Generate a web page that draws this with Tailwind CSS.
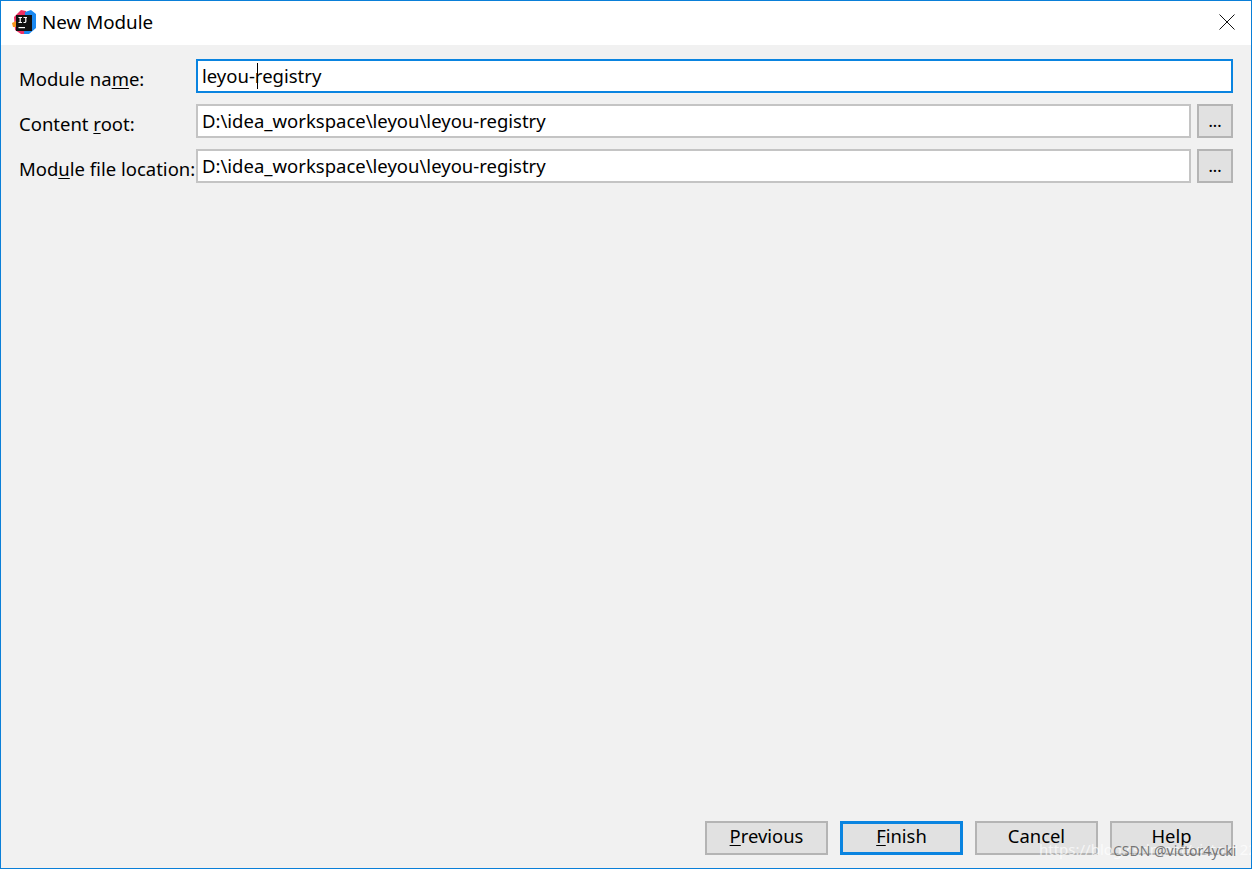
<!DOCTYPE html>
<html lang="en">
<head>
  <meta charset="UTF-8" />
  <title>New Module</title>
  <script src="https://cdn.jsdelivr.net/npm/@tailwindcss/browser@4"></script>
</head>
<body class="w-screen h-screen overflow-hidden font-['Noto_Sans',sans-serif] text-black">
  <div class="relative w-[1252px] h-[869px] flex flex-col border border-[#0a7fd8] bg-[#f1f1f1] overflow-hidden">

    <!-- title bar -->
    <div class="h-[44px] shrink-0 bg-white flex items-center pl-[11px] pr-[16px] pb-[2px]">
      <svg width="25" height="25" viewBox="0 0 25 25" class="shrink-0">
        <path d="M2 7 L9 0 L14 1 L14 24 L9 24 L3 20 Z" fill="#ef2f63"/>
        <path d="M0 13 L4 11 L4 17 L1 17 Z" fill="#f7941d"/>
        <path d="M13 2 L19 0 L24 4 L24 18 L17 24 L12 24 Z" fill="#1b88f0"/>
        <rect x="4" y="5" width="16" height="16" fill="#111"/>
        <path d="M6.5 7.5 H10 M8.2 7.5 V12.5 M6.5 12.5 H10 M11.5 7.5 H15 M13.8 7.5 V11.5 Q13.8 12.5 12.8 12.5 H11.5" stroke="#fff" stroke-width="1.2" fill="none"/>
        <rect x="6.5" y="17" width="6.5" height="1.2" fill="#fff"/>
      </svg>
      <span class="ml-[5px] text-[18.8px] leading-none">New Module</span>
      <svg width="16" height="16" viewBox="0 0 16 16" class="ml-auto">
        <path d="M0.5 0.5 L15.5 15.5 M15.5 0.5 L0.5 15.5" stroke="#111" stroke-width="1" fill="none"/>
      </svg>
    </div>

    <!-- form -->
    <div class="flex-1 flex flex-col pl-[18px] pr-[18px] pt-[14px] gap-[11px] text-[18.5px]">
      <div class="flex h-[34px]">
        <label class="w-[177px] shrink-0 leading-[40px] whitespace-nowrap">Module na<u class="underline-offset-2">m</u>e:</label>
        <div class="flex-1 border-2 border-[#0a84e0] bg-white pl-[4px] leading-[30px] relative">leyou-registry
          <span class="absolute left-[59px] top-[2px] h-[26px] w-px bg-black"></span>
        </div>
      </div>
      <div class="flex h-[34px]">
        <label class="w-[177px] shrink-0 leading-[40px] whitespace-nowrap">Content <u class="underline-offset-2">r</u>oot:</label>
        <div class="flex-1 border-2 border-[#c4c4c4] bg-white pl-[4px] leading-[30px]">D:\idea_workspace\leyou\leyou-registry</div>
        <button class="ml-[6px] w-[36px] border-2 border-[#b4b4b4] bg-[#e1e1e1] text-[16px] font-medium leading-none">...</button>
      </div>
      <div class="flex h-[34px]">
        <label class="w-[177px] shrink-0 leading-[40px] whitespace-nowrap">Mod<u class="underline-offset-2">u</u>le file location:</label>
        <div class="flex-1 border-2 border-[#c4c4c4] bg-white pl-[4px] leading-[30px]">D:\idea_workspace\leyou\leyou-registry</div>
        <button class="ml-[6px] w-[36px] border-2 border-[#b4b4b4] bg-[#e1e1e1] text-[16px] font-medium leading-none">...</button>
      </div>
    </div>

    <!-- footer buttons -->
    <div class="flex justify-end gap-[12px] pr-[18px] pb-[13px] text-[18.4px]">
      <button class="w-[123px] h-[34px] border-2 border-[#b4b4b4] bg-[#e1e1e1] leading-none pb-[3px]"><u class="underline-offset-2">P</u>revious</button>
      <button class="w-[123px] h-[34px] border-[3px] border-[#0a84e0] bg-[#e1e1e1] leading-none pb-[3px]"><u class="underline-offset-2">F</u>inish</button>
      <button class="w-[123px] h-[34px] border-2 border-[#b4b4b4] bg-[#e1e1e1] leading-none pb-[3px]">Cancel</button>
      <button class="w-[123px] h-[34px] border-2 border-[#b4b4b4] bg-[#e1e1e1] leading-none pb-[3px]">Help</button>
    </div>

    <!-- watermarks over the footer -->
    <span class="absolute left-[1038px] top-[841px] text-[15px] leading-none text-white/70 whitespace-nowrap">https://blog.csdn.net/victor1228</span>
    <span class="absolute left-[1112px] top-[843px] text-[14px] leading-none text-[#444]/70 whitespace-nowrap">CSDN @victor4ycki</span>
  </div>
</body>
</html>
